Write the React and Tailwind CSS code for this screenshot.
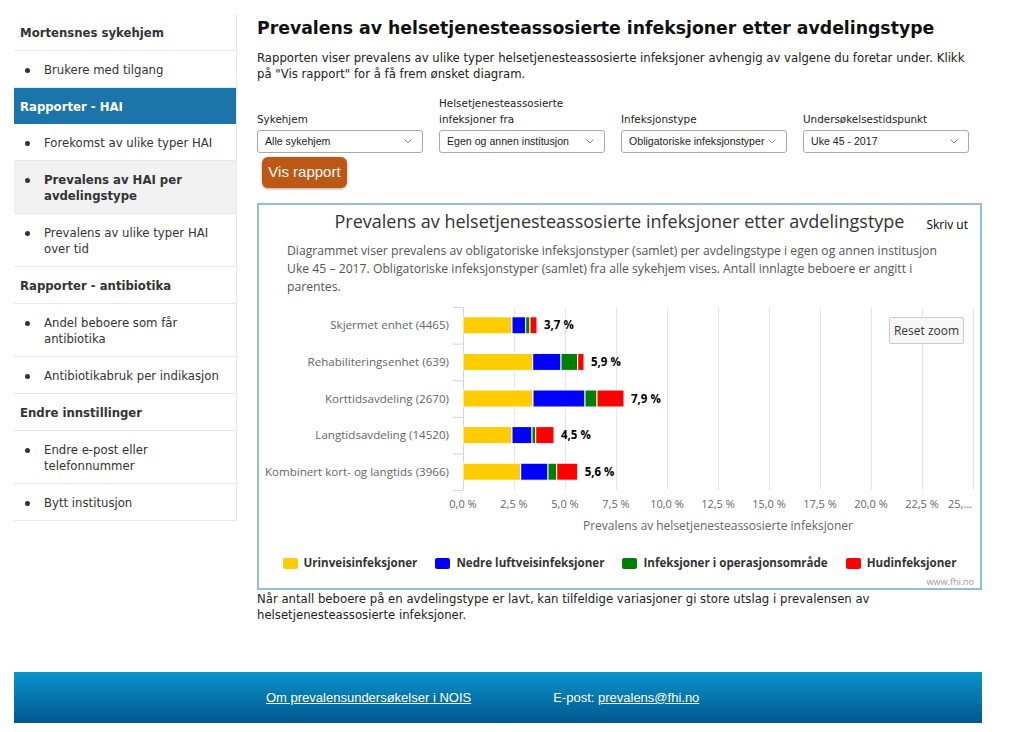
import React from "react";

const rows = [
  { label: "Skjermet enhet (4465)", ends: [512, 525.7, 530, 537], value: "3,7 %" },
  { label: "Rehabiliteringsenhet (639)", ends: [532.7, 561, 577.7, 584], value: "5,9 %" },
  { label: "Korttidsavdeling (2670)", ends: [533, 585, 597, 624], value: "7,9 %" },
  { label: "Langtidsavdeling (14520)", ends: [512, 532, 535.7, 554], value: "4,5 %" },
  { label: "Kombinert kort- og langtids (3966)", ends: [520.7, 548, 556.7, 577.7], value: "5,6 %" },
];
const colors = ["#ffcc00", "#0000ff", "#008000", "#ff0000"];
const ticks = ["0,0 %", "2,5 %", "5,0 %", "7,5 %", "10,0 %", "12,5 %", "15,0 %", "17,5 %", "20,0 %", "22,5 %"];

function Chevron() {
  return (
    <svg width="8" height="5" viewBox="0 0 8 5" className="shrink-0">
      <path d="M0.5 0.5 L4 4 L7.5 0.5" fill="none" stroke="#8a8a8a" strokeWidth="1" />
    </svg>
  );
}

function Select({ value }) {
  return (
    <div className="h-[23px] w-[166px] border border-[#a9a9a9] rounded-[3px] bg-white flex items-center justify-between pl-[7px] pr-[10px] font-['Liberation_Sans',Arial,sans-serif] text-[10.6px] text-[#222] whitespace-nowrap">
      <span>{value}</span>
      <Chevron />
    </div>
  );
}

function SideHeader({ children, blue }) {
  return (
    <div
      className={
        blue
          ? "px-[6px] pt-[11px] pb-[9px] leading-[16px] text-[11.7px] font-bold bg-[#1b75ab] text-white whitespace-nowrap"
          : "px-[6px] pt-[11px] pb-[9px] leading-[16px] text-[11.7px] font-bold border-b border-[#e8e8e8] text-[#333] whitespace-nowrap"
      }
    >
      {children}
    </div>
  );
}

function SideItem({ children, active }) {
  return (
    <div
      className={
        active
          ? "flex pl-[11px] pr-[6px] pt-[11px] pb-[9px] leading-[16px] text-[11.7px] border-b border-[#e8e8e8] bg-[#f2f2f2] font-bold text-[#333] whitespace-nowrap"
          : "flex pl-[11px] pr-[6px] pt-[11px] pb-[9px] leading-[16px] text-[11.7px] border-b border-[#e8e8e8] text-[#333] whitespace-nowrap"
      }
    >
      <span className="w-[5px] h-[5px] rounded-full bg-[#333] mt-[6px] shrink-0" />
      <span className="ml-[14px]">{children}</span>
    </div>
  );
}

function Sidebar() {
  return (
    <div className="w-[223px] border-r border-[#e8e8e8] shrink-0">
      <SideHeader>Mortensnes sykehjem</SideHeader>
      <SideItem>Brukere med tilgang</SideItem>
      <SideHeader blue>Rapporter - HAI</SideHeader>
      <SideItem>Forekomst av ulike typer HAI</SideItem>
      <SideItem active>
        Prevalens av HAI per
        <br />
        avdelingstype
      </SideItem>
      <SideItem>
        Prevalens av ulike typer HAI
        <br />
        over tid
      </SideItem>
      <SideHeader>Rapporter - antibiotika</SideHeader>
      <SideItem>
        Andel beboere som får
        <br />
        antibiotika
      </SideItem>
      <SideItem>Antibiotikabruk per indikasjon</SideItem>
      <SideHeader>Endre innstillinger</SideHeader>
      <SideItem>
        Endre e-post eller
        <br />
        telefonnummer
      </SideItem>
      <SideItem>Bytt institusjon</SideItem>
    </div>
  );
}

function ChartSvg() {
  const ax = 204;
  const top = 11;
  const step = 36.6;
  return (
    <svg width="721" height="240" viewBox="0 0 721 240" className="block font-['Open_Sans',sans-serif]">
      {Array.from({ length: 10 }).map((_, i) => (
        <line key={i} x1={ax + 51 * (i + 1) + 0.5} x2={ax + 51 * (i + 1) + 0.5} y1={top} y2={194} stroke="#e6e6e6" strokeWidth="1" />
      ))}
      <line x1={ax + 0.5} x2={ax + 0.5} y1={top} y2={194} stroke="#ccd6eb" strokeWidth="1" />
      {[0, 1, 2, 3, 4, 5].map((i) => (
        <line key={i} x1={ax - 10} x2={ax} y1={top + step * i + 0.5} y2={top + step * i + 0.5} stroke="#ccd6eb" strokeWidth="1" />
      ))}
      {rows.map((r, i) => {
        const cy = top + step * (i + 0.5);
        let prev = ax;
        return (
          <g key={i}>
            <text x={190} y={cy + 4} textAnchor="end" fontSize="11.6" fill="#666">
              {r.label}
            </text>
            {r.ends.map((e, j) => {
              const x = prev;
              const w = e - 259 - prev;
              prev = e - 259;
              return <rect key={j} x={x} y={cy - 8.5} width={w} height={17} fill={colors[j]} stroke="#ffffff" strokeWidth="1" />;
            })}
            <text x={prev + 7} y={cy + 4} fontSize="11.5" fontWeight="bold" fill="#000" stroke="#fff" strokeWidth="2" paintOrder="stroke">
              {r.value}
            </text>
          </g>
        );
      })}
      {ticks.map((t, i) => (
        <text key={i} x={ax + 51 * i} y={212} textAnchor="middle" fontSize="11" fill="#666">
          {t}
        </text>
      ))}
      <text x={713} y={212} textAnchor="end" fontSize="11" fill="#666">
        25,…
      </text>
      <text x={459} y={234} textAnchor="middle" fontSize="12" fill="#666">
        Prevalens av helsetjenesteassosierte infeksjoner
      </text>
    </svg>
  );
}

function Legend() {
  const items = [
    ["#ffcc00", "Urinveisinfeksjoner"],
    ["#0000ff", "Nedre luftveisinfeksjoner"],
    ["#008000", "Infeksjoner i operasjonsområde"],
    ["#ff0000", "Hudinfeksjoner"],
  ];
  return (
    <div className="mt-[19px] flex justify-center gap-[18px] font-['Open_Sans',sans-serif] text-[11.6px] font-bold text-[#333] leading-[16px]">
      {items.map(([c, t]) => (
        <div key={t} className="flex items-center">
          <span className="w-[15px] h-[11px] rounded-[2px] mr-[6px]" style={{ backgroundColor: c }} />
          <span>{t}</span>
        </div>
      ))}
    </div>
  );
}

function Chart() {
  return (
    <div className="relative mt-[15px] w-[725px] h-[387px] border-2 border-[#93bfd6] bg-white font-['Open_Sans',sans-serif]">
      <div className="pt-[4px] text-center text-[18px] leading-[24px] text-[#333]">
        Prevalens av helsetjenesteassosierte infeksjoner etter avdelingstype
      </div>
      <div className="absolute top-[12px] right-[12px] text-[12px] leading-[16px] text-black">Skriv ut</div>
      <div className="mt-[9px] ml-[28px] text-[12.2px] leading-[18px] text-[#555] whitespace-nowrap">
        Diagrammet viser prevalens av obligatoriske infeksjonstyper (samlet) per avdelingstype i egen og annen institusjon
        <br />
        Uke 45 – 2017. Obligatoriske infeksjonstyper (samlet) fra alle sykehjem vises. Antall innlagte beboere er angitt i
        <br />
        parentes.
      </div>
      <ChartSvg />
      <Legend />
      <div className="absolute top-[112px] right-[16px] w-[75px] h-[27px] flex items-center justify-center bg-[#f7f7f7] border border-[#cccccc] rounded-[2px] text-[12px] text-[#333]">
        Reset zoom
      </div>
      <div className="absolute bottom-[0px] right-[6px] text-[9px] leading-[12px] text-[#999]">www.fhi.no</div>
    </div>
  );
}

function Main() {
  return (
    <div className="ml-[20px] w-[725px]">
      <h1 className="mt-[3px] text-[17.3px] leading-[22px] font-bold text-[#111] whitespace-nowrap">
        Prevalens av helsetjenesteassosierte infeksjoner etter avdelingstype
      </h1>
      <p className="mt-[11px] text-[11.7px] leading-[16px] text-[#222] whitespace-nowrap">
        Rapporten viser prevalens av ulike typer helsetjenesteassosierte infeksjoner avhengig av valgene du foretar under. Klikk
        <br />
        på "Vis rapport" for å få frem ønsket diagram.
      </p>
      <div className="mt-[13px] flex items-end gap-[16px]">
        {[
          [["Sykehjem"], "Alle sykehjem"],
          [["Helsetjenesteassosierte", "infeksjoner fra"], "Egen og annen institusjon"],
          [["Infeksjonstype"], "Obligatoriske infeksjonstyper"],
          [["Undersøkelsestidspunkt"], "Uke 45 - 2017"],
        ].map(([lab, val]) => (
          <div key={val} className="w-[166px]">
            <div className="text-[10.4px] leading-[16px] text-[#222] mb-[3px]">
              {lab.map((l, i) => (
                <div key={i}>{l}</div>
              ))}
            </div>
            <Select value={val} />
          </div>
        ))}
      </div>
      <div className="mt-[4px] ml-[5px] w-[85px] h-[31px] rounded-[6px] bg-[#bd5714] shadow-[0_1px_3px_rgba(0,0,0,0.35)] flex items-center justify-center font-['Liberation_Sans',Arial,sans-serif] text-[15px] text-white">
        Vis rapport
      </div>
      <Chart />
      <p className="mt-[1px] text-[11.7px] leading-[16px] text-[#222] whitespace-nowrap">
        Når antall beboere på en avdelingstype er lavt, kan tilfeldige variasjoner gi store utslag i prevalensen av
        <br />
        helsetjenesteassosierte infeksjoner.
      </p>
    </div>
  );
}

function Footer() {
  return (
    <div className="mt-[49px] w-[968px] h-[51px] bg-linear-to-b from-[#0b95cb] to-[#02588f] flex items-center pl-[252px] gap-[82px] font-['Liberation_Sans',Arial,sans-serif] text-[13px] text-white">
      <span className="underline">Om prevalensundersøkelser i NOIS</span>
      <span>
        E-post: <span className="underline">prevalens@fhi.no</span>
      </span>
    </div>
  );
}

export default function App() {
  return (
    <div className="w-[1024px] min-h-[732px] bg-white font-['DejaVu_Sans',Verdana,sans-serif] text-[#222]">
      <div className="pt-[14px] pl-[14px]">
        <div className="flex items-start">
          <Sidebar />
          <Main />
        </div>
        <Footer />
      </div>
    </div>
  );
}
